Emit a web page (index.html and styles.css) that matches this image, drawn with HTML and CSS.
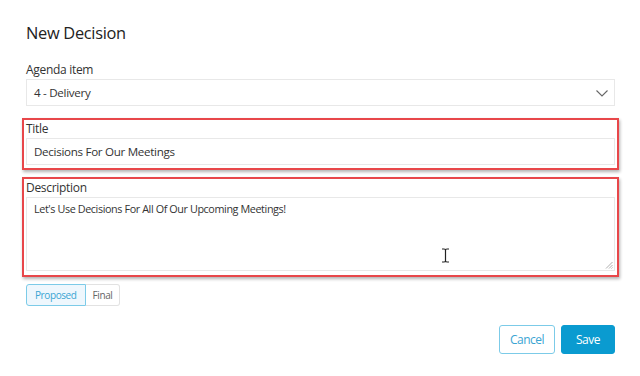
FILE: index.html
```html
<!DOCTYPE html>
<html lang="en">
<head>
    <meta charset="UTF-8">
    <title>New Decision</title>
    <link rel="stylesheet" href="styles.css">
</head>
<body>
    <div class="dialog">
        <h1 class="dialog-title">New Decision</h1>

        <div class="field">
            <label class="field-label">Agenda item</label>
            <div class="select-box">
                <span>4 - Delivery</span>
                <svg class="chevron" width="12" height="7" viewBox="0 0 12 7">
                    <path d="M0.5 0.5 L6 6 L11.5 0.5" fill="none" stroke="#666" stroke-width="1.1"/>
                </svg>
            </div>
        </div>

        <div class="field highlight">
            <label class="field-label">Title</label>
            <div class="text-input">Decisions For Our Meetings</div>
        </div>

        <div class="field highlight">
            <label class="field-label">Description</label>
            <div class="text-area">
                Let's Use Decisions For All Of Our Upcoming Meetings!
                <svg class="grip" width="8" height="8" viewBox="0 0 8 8">
                    <path d="M7.5 1 L1 7.5 M7.5 4 L4 7.5 M7.5 6.5 L6.5 7.5" stroke="#999" stroke-width="0.8"/>
                </svg>
                <svg class="ibeam" width="9" height="15" viewBox="0 0 9 15">
                    <path d="M1 1 H3.5 M5.5 1 H8 M3.5 1.5 Q4.5 1 4.5 2.5 V12.5 Q4.5 14 3.5 13.5 M5.5 1.5 Q4.5 1 4.5 2.5 M4.5 12.5 Q4.5 14 5.5 13.5 M1 14 H3.5 M5.5 14 H8" fill="none" stroke="#222" stroke-width="1.2"/>
                </svg>
            </div>
        </div>

        <div class="status-toggle">
            <button class="toggle-btn active">Proposed</button>
            <button class="toggle-btn">Final</button>
        </div>

        <div class="actions">
            <button class="btn btn-cancel">Cancel</button>
            <button class="btn btn-save">Save</button>
        </div>
    </div>
</body>
</html>
```

FILE: styles.css
```css
body {
    margin: 0;
    font-family: "Open Sans", "Liberation Sans", sans-serif;
    color: #333;
    background: #fff;
}
.dialog {
    width: 589px;
    padding: 22px 25px 20px 26px;
}
.dialog-title {
    margin: 0 0 16px 0;
    font-size: 16.4px;
    letter-spacing: -0.3px;
    font-weight: 400;
    line-height: 22px;
    color: #222;
}
.field {
    display: flex;
    flex-direction: column;
}
.field-label {
    font-size: 12px;
    letter-spacing: -0.3px;
    line-height: 19px;
    color: #333;
}
.select-box {
    height: 25px;
    border: 1px solid #e8e8e8;
    display: flex;
    align-items: center;
    justify-content: space-between;
    padding: 0 6px 0 7px;
    font-size: 11.6px;
    letter-spacing: -0.3px;
}
.chevron {
    margin-top: 2px;
}
.highlight {
    margin: 12px -4px 0 -4px;
    border: 2px solid #e8474a;
    padding: 0 2px 3px 2px;
    box-shadow: 1px 2px 3px rgba(0, 0, 0, 0.3);
}
.highlight + .highlight {
    margin-top: 7px;
    padding-bottom: 4px;
}
.highlight .field-label {
    line-height: 18px;
}
.text-input {
    height: 27px;
    box-sizing: border-box;
    border: 1px solid #e8e8e8;
    display: flex;
    align-items: center;
    padding: 0 7px;
    font-size: 11.6px;
    letter-spacing: -0.3px;
}
.text-area {
    position: relative;
    border: 1px solid #e8e8e8;
    padding: 3px 7px;
    box-sizing: border-box;
    height: 74px;
    font-size: 10.8px;
    letter-spacing: -0.4px;
    line-height: 16px;
}
.grip {
    position: absolute;
    right: 1px;
    bottom: 1px;
}
.ibeam {
    position: absolute;
    left: 414px;
    top: 50px;
}
.status-toggle {
    display: flex;
    margin-top: 7px;
}
.toggle-btn {
    font-family: inherit;
    font-size: 10px;
    letter-spacing: -0.4px;
    height: 22px;
    padding: 0 7px;
    background: #fff;
    border: 1px solid #e2e2e2;
    color: #666;
    border-radius: 0 3px 3px 0;
    border-left: none;
}
.toggle-btn.active {
    background: #eef7fd;
    border: 1px solid #7ccbe8;
    color: #3aa5d3;
    border-radius: 3px 0 0 3px;
    padding: 0 8px;
}
.actions {
    display: flex;
    justify-content: flex-end;
    gap: 6px;
    margin-top: 19px;
}
.btn {
    font-family: inherit;
    font-size: 12px;
    letter-spacing: -0.5px;
    height: 29px;
    border-radius: 3px;
    padding: 0;
    cursor: pointer;
}
.btn-cancel {
    background: #fff;
    border: 1px solid #7ccbe8;
    color: #3aa5d3;
    width: 56px;
}
.btn-save {
    background: #0a9bd0;
    border: 1px solid #0a9bd0;
    color: #fff;
    width: 54px;
}
```
